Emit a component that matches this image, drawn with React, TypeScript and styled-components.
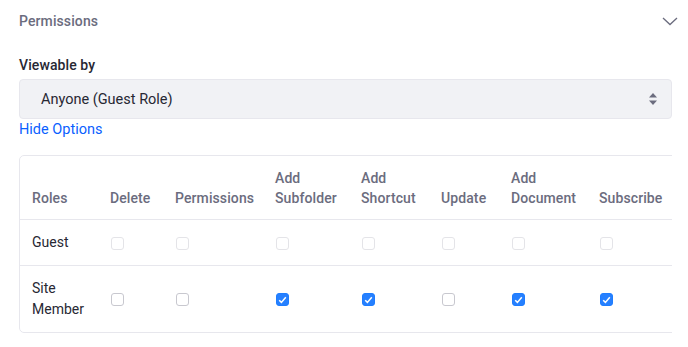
import React from "react";
import styled, { createGlobalStyle } from "styled-components";

const Global = createGlobalStyle`
  html, body { margin: 0; padding: 0; background: #fff; }
  body { font-family: Roboto, Inter, "Liberation Sans", sans-serif; color: #272833; }
  * { box-sizing: border-box; }
`;

const Page = styled.div`
  width: 688px;
  padding: 1px 16px 0 19px;
`;

const SheetHeader = styled.div`
  height: 40px;
  display: flex;
  align-items: center;
  justify-content: space-between;
  margin-right: -6px;
`;

const Title = styled.span`
  font-size: 14px;
  font-weight: 500;
  color: #6b6c7e;
  letter-spacing: 0.1px;
`;

const Label = styled.label`
  display: block;
  margin-top: 14px;
  font-size: 14px;
  font-weight: 500;
  line-height: 21px;
  color: #272833;
  letter-spacing: 0.1px;
`;

const Select = styled.div`
  margin-top: 3px;
  height: 40px;
  border: 1px solid #e7e7ed;
  border-radius: 4px;
  background: #f1f2f5;
  display: flex;
  align-items: center;
  justify-content: space-between;
  padding: 0 13px 0 21px;
  font-size: 14.5px;
  color: #272833;
`;

const LinkText = styled.a`
  display: block;
  font-size: 14.5px;
  line-height: 21px;
  color: #0b5fff;
  text-decoration: none;
`;

const TableClip = styled.div`
  margin-top: 15px;
  width: 653px;
  overflow: hidden;
`;

const Table = styled.table`
  table-layout: fixed;
  width: 660px;
  border-collapse: separate;
  border-spacing: 0;
  border: 1px solid #e7e7ed;
  border-radius: 5px;
  font-size: 14px;
`;

const Th = styled.th`
  text-align: left;
  vertical-align: bottom;
  font-weight: 500;
  color: #6b6c7e;
  line-height: 20px;
  padding: 12px 12px 11px;
  letter-spacing: 0.1px;
  border-bottom: 1px solid #e7e7ed;
`;

const Td = styled.td<{ $last?: boolean }>`
  vertical-align: middle;
  line-height: 21px;
  padding: 12px;
  color: #272833;
  border-bottom: ${(p) => (p.$last ? "none" : "1px solid #e7e7ed")};
`;

const Box = styled.span<{ $checked?: boolean; $disabled?: boolean }>`
  display: inline-flex;
  align-items: center;
  justify-content: center;
  width: 13px;
  height: 13px;
  margin-left: 1px;
  vertical-align: middle;
  border-radius: 3px;
  border: 1px solid
    ${(p) => (p.$checked ? "#1e7dff" : p.$disabled ? "#e4e4e8" : "#c8c8cf")};
  background: ${(p) => (p.$checked ? "#2680ff" : "#fff")};
`;

const Chevron = () => (
  <svg width="16" height="9" viewBox="0 0 16 9" fill="none">
    <path d="M1 1l7 6.5L15 1" stroke="#6b6c7e" strokeWidth="1.3" />
  </svg>
);

const UpDown = () => (
  <svg width="10" height="14" viewBox="0 0 10 14">
    <path d="M1 5.5L5 1l4 4.5z" fill="#6b6c7e" />
    <path d="M1 8.5L5 13l4-4.5z" fill="#6b6c7e" />
  </svg>
);

const Check = ({ checked, disabled }: { checked?: boolean; disabled?: boolean }) => (
  <Box $checked={checked} $disabled={disabled}>
    {checked && (
      <svg width="9" height="8" viewBox="0 0 9 8" fill="none">
        <path d="M1.2 4.2l2.2 2.2L7.8 1.2" stroke="#fff" strokeWidth="1.5" />
      </svg>
    )}
  </Box>
);

const widths = [78, 65, 100, 86, 80, 70, 88, 93];
const headers: React.ReactNode[] = [
  "Roles",
  "Delete",
  "Permissions",
  <>Add<br />Subfolder</>,
  <>Add<br />Shortcut</>,
  "Update",
  <>Add<br />Document</>,
  "Subscribe",
];

const rows = [
  { name: <>Guest</>, checks: [false, false, false, false, false, false, false], disabled: true },
  { name: <>Site<br />Member</>, checks: [false, false, true, true, false, true, true], disabled: false },
];

export default function App() {
  return (
    <Page>
      <Global />
      <SheetHeader>
        <Title>Permissions</Title>
        <Chevron />
      </SheetHeader>
      <Label>Viewable by</Label>
      <Select>
        <span>Anyone (Guest Role)</span>
        <UpDown />
      </Select>
      <LinkText href="#">Hide Options</LinkText>
      <TableClip>
        <Table>
          <colgroup>
            {widths.map((w, i) => (
              <col key={i} style={{ width: w }} />
            ))}
          </colgroup>
          <thead>
            <tr>
              {headers.map((h, i) => (
                <Th key={i}>{h}</Th>
              ))}
            </tr>
          </thead>
          <tbody>
            {rows.map((r, ri) => (
              <tr key={ri}>
                <Td $last={ri === rows.length - 1}>{r.name}</Td>
                {r.checks.map((c, ci) => (
                  <Td key={ci} $last={ri === rows.length - 1}>
                    <Check checked={c} disabled={r.disabled} />
                  </Td>
                ))}
              </tr>
            ))}
          </tbody>
        </Table>
      </TableClip>
    </Page>
  );
}
